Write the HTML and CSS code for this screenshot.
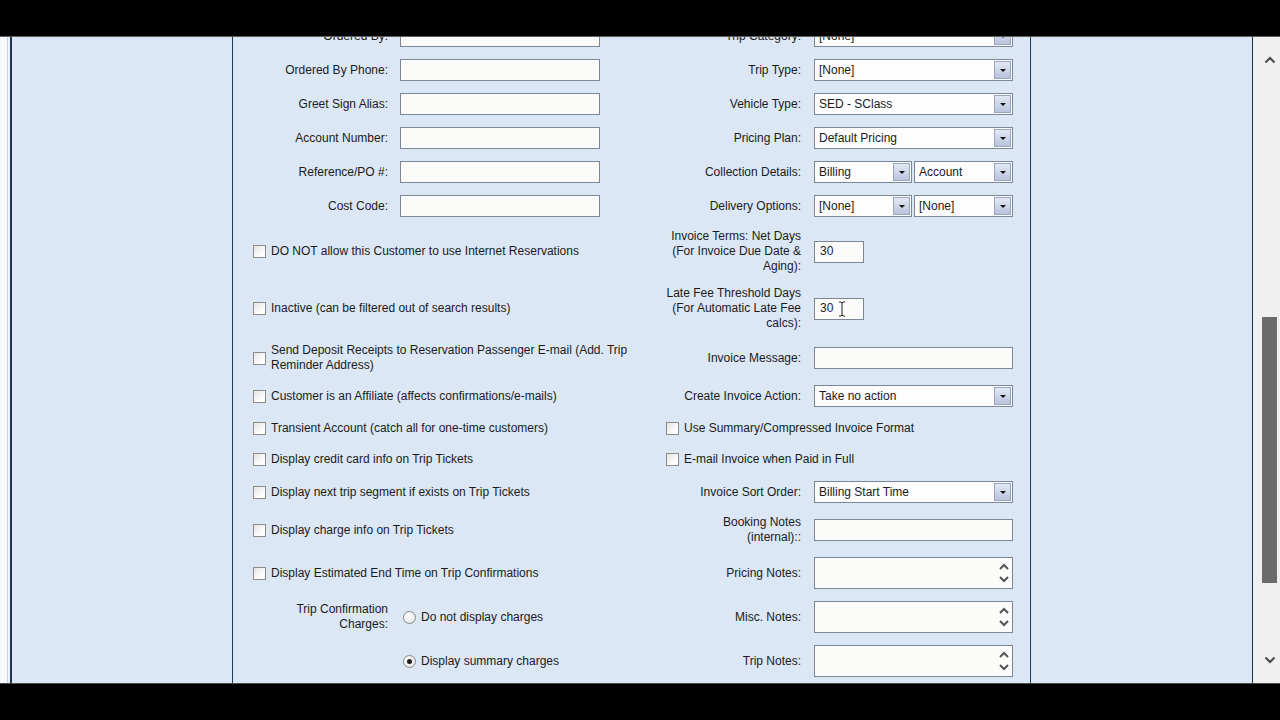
FILE: index.html
```html
<!DOCTYPE html>
<html>
<head>
<meta charset="utf-8">
<link rel="stylesheet" href="styles.css">
</head>
<body>
<div class="screen">
  <div class="bar-top"></div>
  <div class="viewport">
    <div class="edge"></div>
    <div class="page">
      <div class="panel">
        <div class="form">
          <div class="lbl">Ordered By:</div>
          <div class="ctl"><div class="input"></div></div>
          <div class="lbl r">Trip Category:</div>
          <div class="ctl"><div class="select"><span class="val">[None]</span><span class="btn"></span></div></div>

          <div class="lbl">Ordered By Phone:</div>
          <div class="ctl"><div class="input"></div></div>
          <div class="lbl r">Trip Type:</div>
          <div class="ctl"><div class="select"><span class="val">[None]</span><span class="btn"></span></div></div>

          <div class="lbl">Greet Sign Alias:</div>
          <div class="ctl"><div class="input"></div></div>
          <div class="lbl r">Vehicle Type:</div>
          <div class="ctl"><div class="select"><span class="val">SED - SClass</span><span class="btn"></span></div></div>

          <div class="lbl">Account Number:</div>
          <div class="ctl"><div class="input"></div></div>
          <div class="lbl r">Pricing Plan:</div>
          <div class="ctl"><div class="select"><span class="val">Default Pricing</span><span class="btn"></span></div></div>

          <div class="lbl">Reference/PO #:</div>
          <div class="ctl"><div class="input"></div></div>
          <div class="lbl r">Collection Details:</div>
          <div class="ctl split">
            <div class="select half"><span class="val">Billing</span><span class="btn"></span></div>
            <div class="select half2"><span class="val">Account</span><span class="btn"></span></div>
          </div>

          <div class="lbl">Cost Code:</div>
          <div class="ctl"><div class="input"></div></div>
          <div class="lbl r">Delivery Options:</div>
          <div class="ctl split">
            <div class="select half"><span class="val">[None]</span><span class="btn"></span></div>
            <div class="select half2"><span class="val">[None]</span><span class="btn"></span></div>
          </div>

          <div class="chk"><span class="box"></span><span class="txt">DO NOT allow this Customer to use Internet Reservations</span></div>
          <div class="lbl r">Invoice Terms: Net Days<br>(For Invoice Due Date &amp;<br>Aging):</div>
          <div class="ctl"><div class="input small">30</div></div>

          <div class="chk"><span class="box"></span><span class="txt">Inactive (can be filtered out of search results)</span></div>
          <div class="lbl r">Late Fee Threshold Days<br>(For Automatic Late Fee<br>calcs):</div>
          <div class="ctl"><div class="input small">30<svg class="ibeam" width="8" height="16" viewBox="0 0 8 16"><path d="M1 1h2l1 1 1-1h2M4 2v12M1 15h2l1-1 1 1h2" fill="none" stroke="#222" stroke-width="1"/></svg></div></div>

          <div class="chk"><span class="box"></span><span class="txt wrap">Send Deposit Receipts to Reservation Passenger E-mail (Add. Trip Reminder Address)</span></div>
          <div class="lbl r">Invoice Message:</div>
          <div class="ctl"><div class="input full"></div></div>

          <div class="chk"><span class="box"></span><span class="txt">Customer is an Affiliate (affects confirmations/e-mails)</span></div>
          <div class="lbl r">Create Invoice Action:</div>
          <div class="ctl"><div class="select"><span class="val">Take no action</span><span class="btn"></span></div></div>

          <div class="chk"><span class="box"></span><span class="txt">Transient Account (catch all for one-time customers)</span></div>
          <div class="chk r"><span class="box"></span><span class="txt">Use Summary/Compressed Invoice Format</span></div>

          <div class="chk"><span class="box"></span><span class="txt">Display credit card info on Trip Tickets</span></div>
          <div class="chk r"><span class="box"></span><span class="txt">E-mail Invoice when Paid in Full</span></div>

          <div class="chk"><span class="box"></span><span class="txt">Display next trip segment if exists on Trip Tickets</span></div>
          <div class="lbl r">Invoice Sort Order:</div>
          <div class="ctl"><div class="select"><span class="val">Billing Start Time</span><span class="btn"></span></div></div>

          <div class="chk"><span class="box"></span><span class="txt">Display charge info on Trip Tickets</span></div>
          <div class="lbl r">Booking Notes<br>(internal)::</div>
          <div class="ctl"><div class="input full"></div></div>

          <div class="chk"><span class="box"></span><span class="txt">Display Estimated End Time on Trip Confirmations</span></div>
          <div class="lbl r">Pricing Notes:</div>
          <div class="ctl"><div class="notes"><span class="arrows"><svg width="12" height="20" viewBox="0 0 12 20"><path d="M2 6l4-4 4 4M2 14l4 4 4-4" fill="none" stroke="#555" stroke-width="2"/></svg></span></div></div>

          <div class="lbl">Trip Confirmation<br>Charges:</div>
          <div class="ctl"><span class="radio"></span><span class="txt">Do not display charges</span></div>
          <div class="lbl r">Misc. Notes:</div>
          <div class="ctl"><div class="notes"><span class="arrows"><svg width="12" height="20" viewBox="0 0 12 20"><path d="M2 6l4-4 4 4M2 14l4 4 4-4" fill="none" stroke="#555" stroke-width="2"/></svg></span></div></div>

          <div class="lbl"></div>
          <div class="ctl"><span class="radio on"></span><span class="txt">Display summary charges</span></div>
          <div class="lbl r">Trip Notes:</div>
          <div class="ctl"><div class="notes"><span class="arrows"><svg width="12" height="20" viewBox="0 0 12 20"><path d="M2 6l4-4 4 4M2 14l4 4 4-4" fill="none" stroke="#555" stroke-width="2"/></svg></span></div></div>
        </div>
      </div>
    </div>
    <div class="scrollbar">
      <div class="sb-arrow"><svg width="12" height="8" viewBox="0 0 12 8"><path d="M1.5 6.5l4.5-4.5 4.5 4.5" fill="none" stroke="#4a4a4a" stroke-width="2"/></svg></div>
      <div class="sb-track"><div class="sb-thumb"></div></div>
      <div class="sb-arrow"><svg width="12" height="8" viewBox="0 0 12 8"><path d="M1.5 1.5l4.5 4.5 4.5-4.5" fill="none" stroke="#4a4a4a" stroke-width="2"/></svg></div>
    </div>
  </div>
  <div class="bar-bot"></div>
</div>
</body>
</html>
```
FILE: styles.css
```css
* { box-sizing: border-box; }
html, body { margin: 0; padding: 0; background: #000; }
body {
  font-family: "Liberation Sans", Arial, sans-serif;
  font-size: 12px;
  color: #1b1b1b;
}
.screen { width: 1280px; height: 720px; display: flex; flex-direction: column; overflow: hidden; }
.bar-top { height: 37px; flex: none; background: #000; border-bottom: 1px solid #5c5c5c; }
.bar-bot { height: 37px; flex: none; background: #000; border-top: 1px solid #4c4c4c; }
.viewport { height: 646px; flex: none; display: flex; overflow: hidden; background: #dde8f5; }
.edge {
  width: 12px; flex: none;
  background: linear-gradient(90deg, #f6f8fb 0, #f6f8fb 7px, #c9d3df 7px, #c9d3df 8px, #eef3f9 8px);
  border-right: 2px solid #1d3555;
}
.page { width: 1241px; flex: none; overflow: hidden; background: #dce7f5; border-right: 1px solid #1d3555; }
.panel {
  margin-left: 220px;
  width: 799px;
  min-height: 700px;
  border-left: 1px solid #1f3a5e;
  border-right: 1px solid #1f3a5e;
  background: #dce7f5;
}
.form {
  display: grid;
  grid-template-columns: 147px 252px 162px 199px;
  padding: 0 17px 0 20px;
  margin-top: -18px;
}
.lbl {
  display: flex; align-items: center; justify-content: flex-end;
  text-align: right; line-height: 15px;
  padding: 6px 12px 6px 0;
  white-space: nowrap;
}
.lbl.r { padding-right: 13px; }
.ctl { display: flex; align-items: center; padding: 6px 0; line-height: 15px; }
.chk { grid-column: span 2; display: flex; align-items: center; padding: 6px 0; line-height: 15px; }
.chk.r { padding-left: 14px; }
.chk .txt.wrap { padding-right: 4px; }
.box {
  width: 13px; height: 13px; flex: none;
  margin: 3px 5px 3px 0;
  border: 1px solid #8c8c8c;
  background: linear-gradient(135deg, #e4e4e4, #fdfdfd 70%);
}
.input {
  position: relative;
  width: 200px; height: 22px;
  border: 1px solid #7b8797;
  background: #fbfbfa;
  display: flex; align-items: center;
  padding: 0 5px;
}
.input.full { width: 199px; }
.input.small { width: 50px; }
.ibeam { position: absolute; left: 23px; top: 2px; }
.select {
  width: 199px; height: 22px;
  border: 1px solid #7b8797;
  background: #fdfdfd;
  display: flex; align-items: center;
  padding-left: 4px;
}
.select .val { flex: 1; white-space: nowrap; overflow: hidden; }
.select .btn {
  width: 17px; height: 18px; flex: none;
  margin-right: 1px;
  border: 1px solid #9aa6c0;
  background: linear-gradient(#e3e8f4, #b9c3dd);
  display: flex; align-items: center; justify-content: center;
}
.select .btn::after {
  content: "";
  border-left: 3px solid transparent;
  border-right: 3px solid transparent;
  border-top: 3px solid #111;
  margin-top: 1px;
}
.split { gap: 2px; }
.select.half { width: 98px; }
.select.half2 { width: 99px; }
.notes {
  width: 199px; height: 32px;
  border: 1px solid #7b8797;
  background: #fbfbfa;
  display: flex; justify-content: flex-end; align-items: center;
  padding-right: 2px;
}
.arrows { display: flex; }
.radio {
  width: 13px; height: 13px; flex: none;
  border-radius: 50%;
  border: 1px solid #8a8a8a;
  background: radial-gradient(circle at 40% 35%, #ffffff, #e0e0e0);
  margin: 0 5px 0 3px;
  display: flex; align-items: center; justify-content: center;
}
.radio.on::after {
  content: "";
  width: 5px; height: 5px; border-radius: 50%;
  background: #1e1e1e;
}
.scrollbar {
  width: 27px; flex: none;
  background: #f0f0f0;
  display: flex; flex-direction: column;
}
.sb-arrow { height: 46px; flex: none; display: flex; align-items: center; padding-left: 11px; }
.sb-track { flex: 1; padding-top: 234px; padding-left: 9px; }
.sb-thumb { width: 15px; height: 266px; background: #6b6b6b; }
```
